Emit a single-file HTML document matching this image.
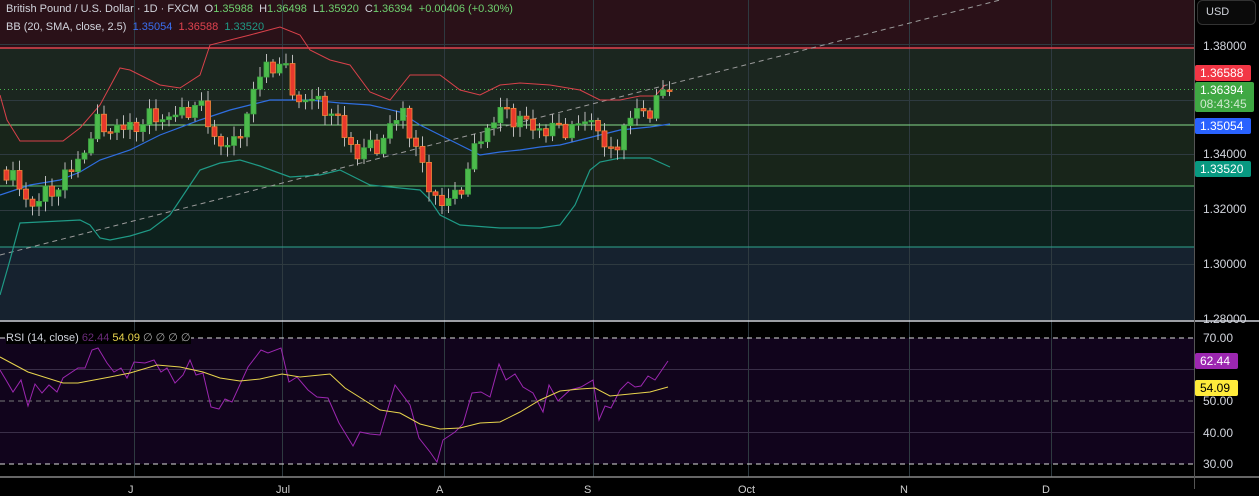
<!DOCTYPE html>
<html><head><meta charset="utf-8"><style>
html,body{margin:0;padding:0;background:#000;width:1259px;height:489px;overflow:hidden;font-family:"Liberation Sans",sans-serif}
#c{position:absolute;left:0;top:0}
.t{position:absolute;font-size:11px;white-space:nowrap;color:#d1d4dc}
.lb{position:absolute;left:1195px;color:#fff;font-size:12px;padding:0 0 0 5px;border-radius:2px;line-height:16px}
.ax{position:absolute;left:1203px;color:#d1d4dc;font-size:12px}
</style></head><body>
<svg id="c" width="1259" height="489" xmlns="http://www.w3.org/2000/svg">
<rect x="0" y="0" width="1194" height="48" fill="#2a1118"/>
<rect x="0" y="48" width="1194" height="77" fill="#1b261f"/>
<rect x="0" y="125" width="1194" height="61" fill="#18251a"/>
<rect x="0" y="186" width="1194" height="61" fill="#0d211d"/>
<rect x="0" y="247" width="1194" height="73" fill="#16222f"/>
<rect x="0" y="338" width="1194" height="126" fill="#11041c"/>
<g stroke="#2e3a40" stroke-width="1">
<line x1="0" y1="100.5" x2="1194" y2="100.5"/><line x1="0" y1="154.5" x2="1194" y2="154.5"/><line x1="0" y1="210.5" x2="1194" y2="210.5"/><line x1="0" y1="264.5" x2="1194" y2="264.5"/><line x1="0" y1="44.5" x2="1194" y2="44.5"/>
<line x1="134.5" y1="0" x2="134.5" y2="477"/><line x1="282.5" y1="0" x2="282.5" y2="477"/><line x1="444.5" y1="0" x2="444.5" y2="477"/><line x1="593.5" y1="0" x2="593.5" y2="477"/><line x1="748.5" y1="0" x2="748.5" y2="477"/><line x1="909.5" y1="0" x2="909.5" y2="477"/><line x1="1051.5" y1="0" x2="1051.5" y2="477"/>
<line x1="0" y1="369.5" x2="1194" y2="369.5" stroke="#3a2f48"/><line x1="0" y1="432.5" x2="1194" y2="432.5" stroke="#3a2f48"/>
</g>
<line x1="0" y1="48" x2="1194" y2="48" stroke="#e0434f" stroke-width="1.5"/>
<line x1="0" y1="125" x2="1194" y2="125" stroke="#86d98a" stroke-width="1"/>
<line x1="0" y1="186" x2="1194" y2="186" stroke="#5fbf6f" stroke-width="1"/>
<line x1="0" y1="247" x2="1194" y2="247" stroke="#2ea58e" stroke-width="1"/>
<line x1="0" y1="89.5" x2="1194" y2="89.5" stroke="#4caf50" stroke-dasharray="1 3"/>
<line x1="0" y1="255" x2="1000" y2="0" stroke="#9a9a9a" stroke-dasharray="5 4" stroke-width="1"/>
<polyline fill="none" stroke="#d8414a" stroke-width="1" points="0,95 7,120 20,141 63,141 80,128 100,105 120,68 130,70 160,85 180,88 200,75 210,45 250,35 280,27 300,35 310,50 330,60 350,65 370,92 390,100 410,75 440,75 460,90 480,95 500,85 520,83 550,85 580,90 600,100 620,100 640,96 655,96 665,85"/>
<polyline fill="none" stroke="#2f6ee0" stroke-width="1.2" points="0,195 30,185 60,180 80,172 100,160 130,150 160,135 200,120 230,110 250,105 270,100 310,100 340,103 370,105 400,112 420,125 440,135 460,145 480,155 500,152 520,150 540,147 560,145 580,140 600,135 620,130 650,127 670,124"/>
<polyline fill="none" stroke="#1f9a86" stroke-width="1.2" points="0,295 10,260 20,223 40,222 80,220 90,225 100,238 110,240 130,236 150,230 170,215 190,185 200,170 220,163 240,160 260,166 290,177 320,175 340,170 350,175 370,185 400,188 420,190 430,200 440,215 460,225 500,228 540,228 560,225 575,205 590,170 600,162 620,158 650,158 670,167"/>
<g id="cd"></g>
<line x1="0" y1="321" x2="1259" y2="321" stroke="#d1d4dc" stroke-width="1.5"/>
<line x1="0" y1="338" x2="1194" y2="338" stroke="#ddd" stroke-dasharray="5 4"/>
<line x1="0" y1="401" x2="1194" y2="401" stroke="#777" stroke-dasharray="5 4"/>
<line x1="0" y1="464" x2="1194" y2="464" stroke="#ddd" stroke-dasharray="5 4"/>
<polyline fill="none" stroke="#9c27b0" stroke-width="1" points="0,370 6,380 13,392 21,380 28,406 35,384 42,393 49,385 57,392 63,378 78,368 85,368 92,350 98,348 107,363 114,372 121,368 127,378 134,362 145,363 154,360 161,372 167,368 175,383 183,375 190,360 196,375 203,373 211,407 219,409 225,399 232,402 248,367 261,350 268,353 281,348 289,382 297,377 308,390 317,397 328,398 339,423 353,446 360,432 370,434 380,435 395,385 410,405 419,438 430,452 437,462 443,440 455,432 463,424 472,393 481,392 490,397 499,364 506,380 515,374 523,387 533,393 543,412 549,385 558,401 570,390 581,387 593,380 599,420 605,406 611,408 620,390 628,382 635,387 641,386 648,376 655,380 668,361"/>
<polyline fill="none" stroke="#e8d44d" stroke-width="1" points="0,357 28,372 63,383 78,383 110,377 130,373 157,365 180,367 203,372 220,378 240,381 260,379 282,374 300,377 330,374 345,388 380,410 400,413 420,424 440,429 460,428 480,423 500,422 520,412 540,400 560,391 580,389 595,388 610,396 630,394 650,392 668,387"/>
<line x1="0" y1="477" x2="1259" y2="477" stroke="#888" stroke-width="1.5"/>
<line x1="1194.5" y1="0" x2="1194.5" y2="489" stroke="#555"/>
<rect x="1197.5" y="0.5" width="58" height="24" rx="5" fill="#0a0a0a" stroke="#333"/>
</svg>
<div class="t" style="left:6px;top:3px">British Pound / U.S. Dollar · 1D · FXCM &nbsp;O<span style="color:#6fd16f">1.35988</span> &nbsp;H<span style="color:#6fd16f">1.36498</span> &nbsp;L<span style="color:#6fd16f">1.35920</span> &nbsp;C<span style="color:#6fd16f">1.36394</span> &nbsp;<span style="color:#6fd16f">+0.00406 (+0.30%)</span></div>
<div class="t" style="left:6px;top:21px">BB (20, SMA, close, 2.5) &nbsp;<span style="color:#3a6ff0">1.35054</span> &nbsp;<span style="color:#e0434f">1.36588</span> &nbsp;<span style="color:#1f9a86">1.33520</span></div>
<div class="t" style="left:6px;top:331px;background:#000">RSI (14, close) <span style="color:#6a2a7a">62.44</span> <span style="color:#e8d44d">54.09</span> <span style="color:#aaa">∅ ∅ ∅ ∅</span></div>
<div class="t" style="left:1206px;top:6px;font-size:11px">USD</div>
<div class="ax" style="top:39px">1.38000</div>
<div class="ax" style="top:147px">1.34000</div>
<div class="ax" style="top:202px">1.32000</div>
<div class="ax" style="top:257px">1.30000</div>
<div class="ax" style="top:312px">1.28000</div>
<div class="ax" style="top:331px">70.00</div>
<div class="ax" style="top:394px">50.00</div>
<div class="ax" style="top:426px">40.00</div>
<div class="ax" style="top:457px">30.00</div>
<div class="lb" style="top:65px;width:51px;background:#f23645">1.36588</div>
<div class="lb" style="top:82px;width:54px;background:#3fa843;line-height:14px;padding-top:1px;padding-bottom:1px">1.36394<br><span style="color:#cfe9cf">08:43:45</span></div>
<div class="lb" style="top:118px;width:51px;background:#2962ff">1.35054</div>
<div class="lb" style="top:161px;width:51px;background:#089981">1.33520</div>
<div class="lb" style="top:353px;width:38px;background:#9c27b0">62.44</div>
<div class="lb" style="top:380px;width:38px;background:#ffeb3b;color:#000">54.09</div>
<div class="t" style="left:128px;top:484px;color:#ccc">J</div>
<div class="t" style="left:276px;top:484px;color:#ccc">Jul</div>
<div class="t" style="left:436px;top:484px;color:#ccc">A</div>
<div class="t" style="left:584px;top:484px;color:#ccc">S</div>
<div class="t" style="left:738px;top:484px;color:#ccc">Oct</div>
<div class="t" style="left:900px;top:484px;color:#ccc">N</div>
<div class="t" style="left:1042px;top:484px;color:#ccc">D</div>
<script>
(function(){
var kp=[[0,170],[15,185],[30,205],[50,190],[70,170],[95,125],[120,130],[150,118],[180,115],[195,100],[210,135],[230,150],[245,110],[262,65],[280,65],[295,100],[320,102],[340,130],[355,155],[380,140],[395,118],[400,108],[410,140],[420,170],[430,190],[440,208],[455,190],[465,175],[475,140],[500,110],[515,118],[530,128],[550,130],[580,125],[595,118],[600,155],[612,150],[625,118],[645,110],[668,90]];
function f(x){for(var i=1;i<kp.length;i++){if(x<=kp[i][0]){var a=kp[i-1],b=kp[i];return a[1]+(b[1]-a[1])*(x-a[0])/(b[0]-a[0]);}}return kp[kp.length-1][1];}
var NS='http://www.w3.org/2000/svg',g=document.getElementById('cd');
function el(n,at){var e=document.createElementNS(NS,n);for(var k in at)e.setAttribute(k,at[k]);g.appendChild(e);}
var prev=f(0);
for(var x=4;x<=668;x+=6.5){
var r=Math.sin(x*1.7)*0.5+Math.sin(x*0.37+1)*0.5;
var c=f(x)+r*11; if(x>660)c=90;
var o=prev;
var ty=Math.min(o,c),by=Math.max(o,c); if(by-ty<1.5)by=ty+1.5;
var up=c<o;
var hi=ty-2-Math.abs(Math.sin(x*2.3))*8, lo=by+2+Math.abs(Math.cos(x*1.9))*8;
el('line',{x1:x+2.5,y1:hi,x2:x+2.5,y2:lo,stroke:'#bbb','stroke-width':1});
el('rect',{x:x,y:ty,width:5,height:by-ty,fill:up?'#4cbb4c':'#e8392d',stroke:up?'#3fa843':'#f08a3a','stroke-width':0.8});
prev=c;}
})();
</script>
</body></html>
